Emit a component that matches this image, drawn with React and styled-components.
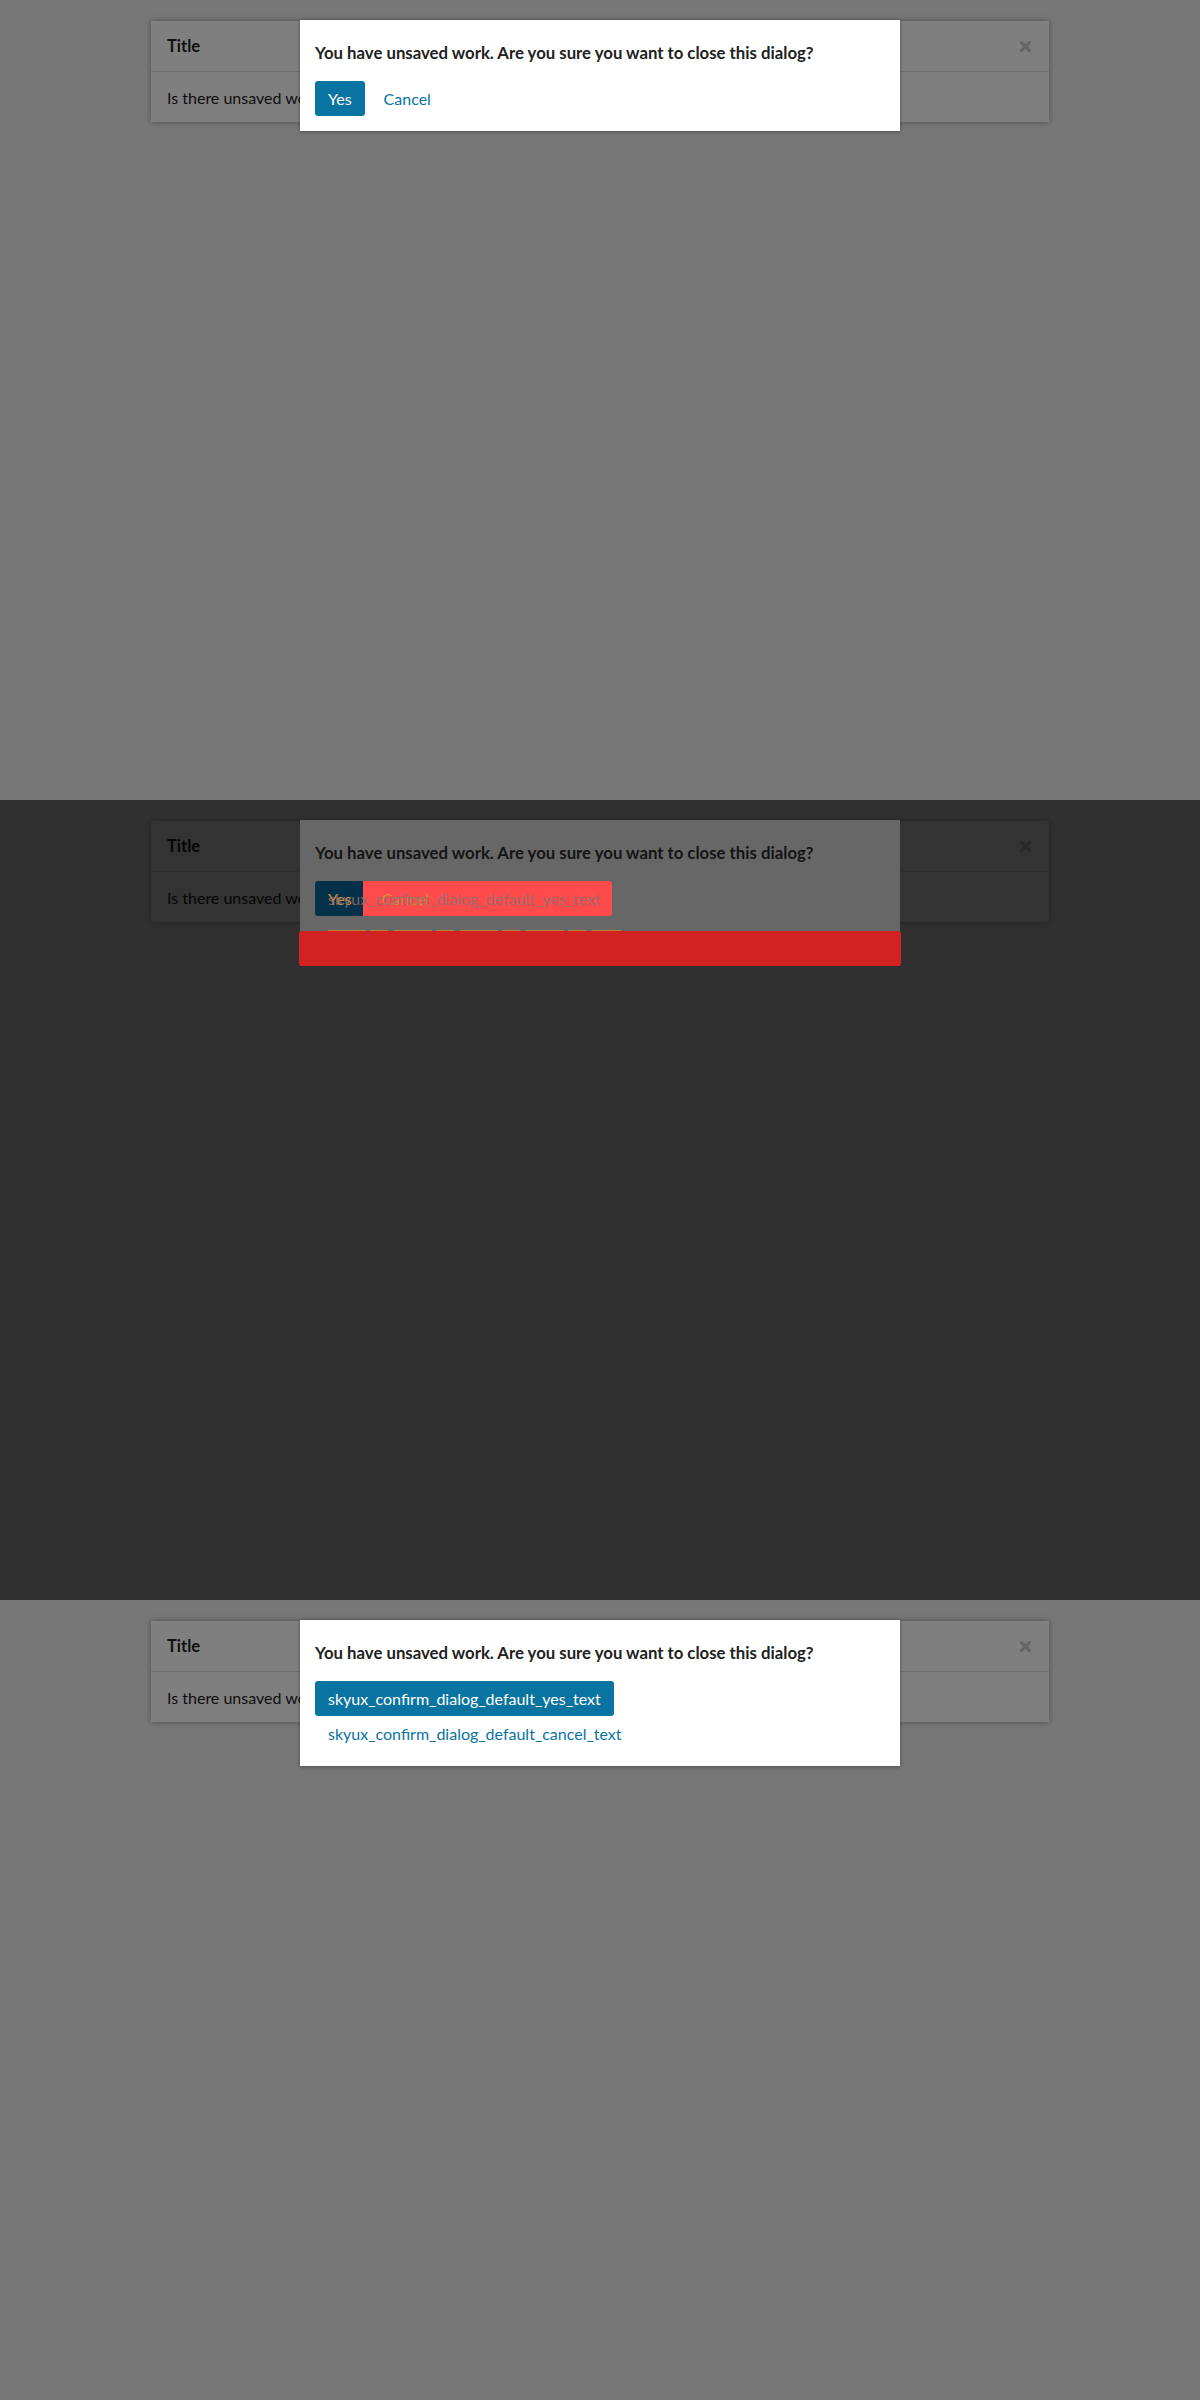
import React from "react";
import styled, { createGlobalStyle } from "styled-components";

const GlobalStyle = createGlobalStyle`
  html, body {
    margin: 0;
    padding: 0;
  }
  body {
    font-family: Lato, "Open Sans", "Liberation Sans", sans-serif;
    color: #212121;
  }
`;

const Shot = styled.section`
  position: relative;
  height: 800px;
  box-sizing: border-box;
  padding-top: 21px;
  background: #eeeeee;
  overflow: hidden;
`;

const Card = styled.div`
  width: 898px;
  margin: 0 auto;
  background: #ffffff;
  box-shadow: 0 0 6px rgba(0, 0, 0, 0.35);
`;

const CardHeader = styled.div`
  display: flex;
  align-items: center;
  justify-content: space-between;
  height: 50px;
  padding: 0 16px;
  border-bottom: 1px solid #dedede;
  font-size: 16.5px;
  font-weight: 700;
`;

const CloseX = styled.span`
  display: flex;
  margin-right: 1px;
  color: #cdcdcd;
`;

const CardBody = styled.div`
  height: 50px;
  display: flex;
  align-items: center;
  padding: 0 16px;
  font-size: 16px;
`;

const Overlay = styled.div`
  position: absolute;
  inset: 0;
  background: rgba(0, 0, 0, ${(p) => p.$alpha});
`;

/* the confirm dialog floats over the modal and its backdrop */
const Dialog = styled.div`
  position: absolute;
  top: 20px;
  left: 300px;
  width: 600px;
  box-sizing: border-box;
  padding: ${(p) => (p.$diff ? "15px 15px 0" : "15px")};
  background: ${(p) => (p.$diff ? "#676767" : "#ffffff")};
  box-shadow: ${(p) => (p.$diff ? "none" : "0 1px 4px rgba(0, 0, 0, 0.35)")};
`;

const DialogText = styled.div`
  padding: 7px 0;
  font-size: 16.75px;
  line-height: 22px;
  font-weight: 700;
  color: ${(p) => (p.$diff ? "#141414" : "#212121")};
`;

const ButtonRow = styled.div`
  display: flex;
  flex-wrap: wrap;
  column-gap: 6px;
  margin-top: 10px;
`;

const Button = styled.button`
  box-sizing: border-box;
  height: 35px;
  padding: 6px 12px;
  border: 1px solid transparent;
  border-radius: 3px;
  font-family: inherit;
  font-size: 16px;
  line-height: 21px;
  white-space: nowrap;
  cursor: pointer;
  background: ${(p) => (p.$primary ? "#0974a1" : "transparent")};
  color: ${(p) => (p.$primary ? "#ffffff" : "#0974a1")};
`;

/* diff view: several layers stacked in one grid cell */
const DiffRow = styled.div`
  display: grid;
  margin-top: 10px;
  & > * {
    grid-area: 1 / 1;
  }
`;

const DiffBoxes = styled.div`
  display: flex;
  height: 35px;
`;

const DiffBox = styled.div`
  width: ${(p) => p.$w}px;
  border-radius: ${(p) => (p.$first ? "3px 0 0 3px" : "0 3px 3px 0")};
  background: ${(p) => p.$bg};
`;

const DiffText = styled.span`
  padding: 7px 0 0 ${(p) => p.$indent}px;
  font-size: 16px;
  line-height: 21px;
  white-space: nowrap;
  color: ${(p) => p.$color};
  opacity: ${(p) => p.$opacity || 1};
`;

const DiffTicks = styled.div`
  width: 293px;
  height: 1px;
  margin: 14px 0 0 13px;
  opacity: 0.85;
  background: repeating-linear-gradient(
    90deg,
    #c88a3a 0 38px,
    transparent 38px 42px,
    #c88a3a 42px 60px,
    transparent 60px 66px
  );
`;

const DiffStrip = styled.div`
  height: 35px;
  margin: 0 -16px;
  border-radius: 3px;
  background: #d32222;
`;

const XIcon = () => (
  <svg width="13" height="13" viewBox="0 0 13 13">
    <path d="M2.5 2.5 L10.5 10.5 M10.5 2.5 L2.5 10.5" stroke="currentColor" strokeWidth="3.4" strokeLinecap="round" />
  </svg>
);

const Page = ({ alpha, children }) => (
  <Shot>
    <Card>
      <CardHeader>
        Title
        <CloseX>
          <XIcon />
        </CloseX>
      </CardHeader>
      <CardBody>Is there unsaved work?</CardBody>
    </Card>
    <Overlay $alpha={alpha} />
    {children}
  </Shot>
);

const question = "You have unsaved work. Are you sure you want to close this dialog?";

export default function App() {
  return (
    <>
      <GlobalStyle />
      <Page alpha={0.5}>
        <Dialog>
          <DialogText>{question}</DialogText>
          <ButtonRow>
            <Button $primary>Yes</Button>
            <Button>Cancel</Button>
          </ButtonRow>
        </Dialog>
      </Page>

      <Page alpha={0.8}>
        <Dialog $diff>
          <DialogText $diff>{question}</DialogText>
          <DiffRow>
            <DiffBoxes>
              <DiffBox $first $w={48} $bg="#04304a" />
              <DiffBox $w={249} $bg="#ff4b4b" />
            </DiffBoxes>
            <DiffText $indent={13} $color="#8a7070" $opacity={0.85}>
              skyux_confirm_dialog_default_yes_text
            </DiffText>
            <DiffText $indent={13} $color="#d8903c">
              Yes
            </DiffText>
            <DiffText $indent={67} $color="#d8903c">
              Cancel
            </DiffText>
          </DiffRow>
          <DiffTicks />
          <DiffStrip />
        </Dialog>
      </Page>

      <Page alpha={0.5}>
        <Dialog>
          <DialogText>{question}</DialogText>
          <ButtonRow>
            <Button $primary>skyux_confirm_dialog_default_yes_text</Button>
            <Button>skyux_confirm_dialog_default_cancel_text</Button>
          </ButtonRow>
        </Dialog>
      </Page>
    </>
  );
}
